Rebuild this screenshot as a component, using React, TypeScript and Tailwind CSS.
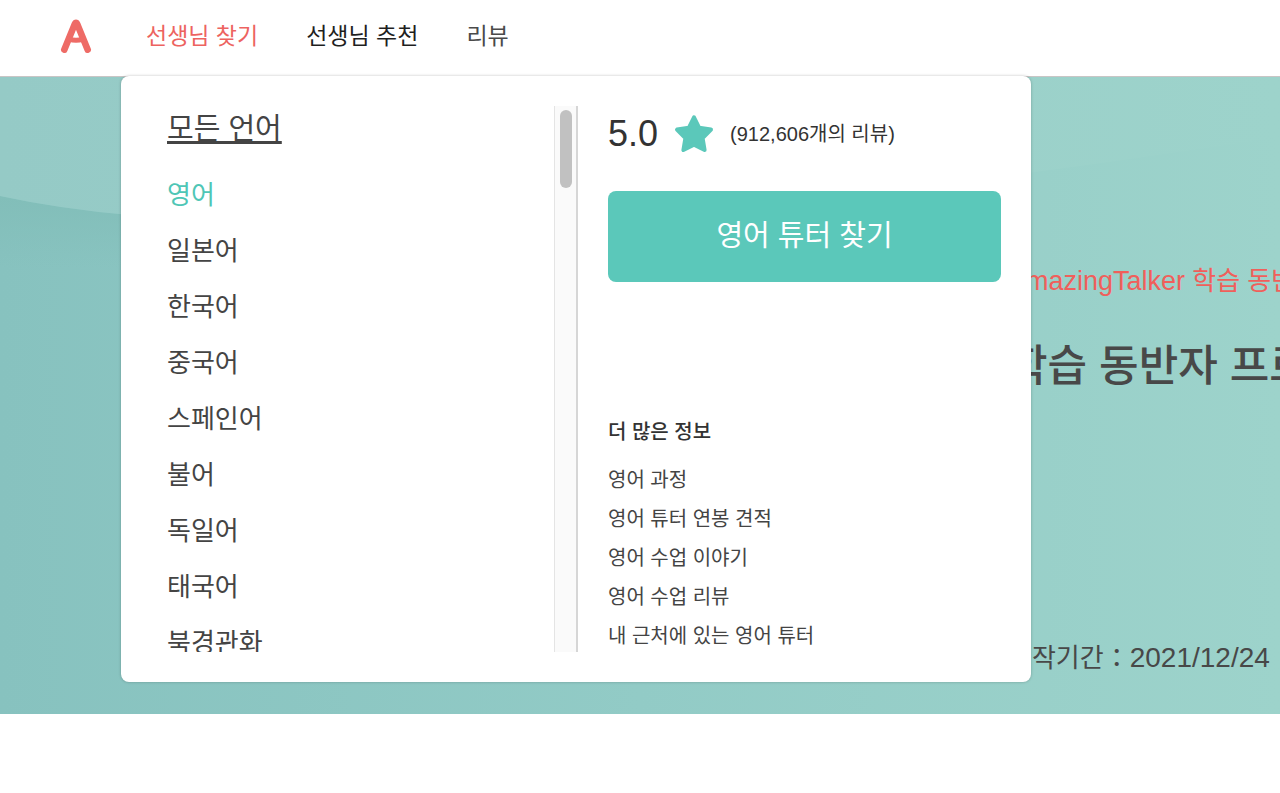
import clsx from "clsx";

const navItems = [
  { text: "선생님 찾기", className: "text-[#ed6360]" },
  { text: "선생님 추천", className: "text-[#1f1f1f]" },
  { text: "리뷰", className: "text-[#4a4a4a]" },
];

const languages = [
  "영어",
  "일본어",
  "한국어",
  "중국어",
  "스페인어",
  "불어",
  "독일어",
  "태국어",
  "북경관화",
];

const moreLinks = [
  "영어 과정",
  "영어 튜터 연봉 견적",
  "영어 수업 이야기",
  "영어 수업 리뷰",
  "내 근처에 있는 영어 튜터",
];

const Logo = () => (
  <svg viewBox="0 0 32 36" className="h-9 w-8" aria-hidden="true">
    <path
      d="M4.3 31.7 14.6 6.4Q16 3.4 17.4 6.4L27.7 31.7"
      fill="none"
      stroke="#ee6b66"
      strokeWidth="6.6"
      strokeLinecap="round"
      strokeLinejoin="round"
    />
    <path
      d="M9 21.2Q16 23.4 23 21.2"
      fill="none"
      stroke="#ee6b66"
      strokeWidth="5"
    />
  </svg>
);

const Star = () => (
  <svg viewBox="0 0 40 40" className="size-10" aria-hidden="true">
    <path
      d="M20 3.4 25.2 13.8 37 15.6 28.6 24.2 30.6 36 20 30.6 9.4 36 11.4 24.2 3 15.6 14.8 13.8Z"
      fill="#5bc8ba"
      stroke="#5bc8ba"
      strokeWidth="4"
      strokeLinejoin="round"
    />
  </svg>
);

const Header = () => (
  <header className="flex h-[77px] items-center border-b border-[#c9c5c5] bg-white pb-1 pl-15">
    <a href="#home" aria-label="AmazingTalker">
      <Logo />
    </a>
    <nav className="ml-[54px] flex gap-12 text-[23px] leading-8">
      {navItems.map(({ text, className }) => (
        <a key={text} href="#nav" className={className}>
          {text}
        </a>
      ))}
    </nav>
  </header>
);

const LanguageList = () => (
  <div className="flex h-[546px] flex-1">
    <div className="flex-1 overflow-hidden pt-px text-[#444]">
      <a
        href="#all"
        className="mb-4 block h-11 text-[29px] leading-11 underline decoration-3 underline-offset-2"
      >
        모든 언어
      </a>
      <ul className="text-[26px] leading-14">
        {languages.map((language, i) => (
          <li key={language}>
            <a href="#language" className={clsx(i === 0 && "text-[#4fc6b6]")}>
              {language}
            </a>
          </li>
        ))}
      </ul>
    </div>
    <div className="w-6 border-r-2 border-l border-r-[#d6d6d6] border-l-[#e4e4e4] bg-[#fafafa] px-1 pt-1">
      <div className="mx-auto h-[78px] w-3 rounded-full bg-[#c1c1c1]" />
    </div>
  </div>
);

const LanguageDetail = () => (
  <div className="w-[453px] px-[30px] text-[#333]">
    <div className="flex h-14 items-center">
      <span className="text-4xl">5.0</span>
      <span className="mx-4">
        <Star />
      </span>
      <span className="text-xl">(912,606개의 리뷰)</span>
    </div>
    <button
      type="button"
      className="mt-[29px] h-[91px] w-full rounded-lg bg-[#5bc8ba] text-[29px] text-white"
    >
      영어 튜터 찾기
    </button>
    <h2 className="mt-[135px] text-xl leading-[30px] font-medium">
      더 많은 정보
    </h2>
    <ul className="-mb-4 pt-[14px] text-xl leading-[39px] text-[#444]">
      {moreLinks.map((text) => (
        <li key={text}>
          <a href="#more">{text}</a>
        </li>
      ))}
    </ul>
  </div>
);

const Hero = () => (
  <section className="relative h-[637px] overflow-hidden bg-linear-to-r from-[#87c2bf] via-[#92cbc6] to-[#9dd3cb]">
    <svg
      viewBox="0 0 1280 637"
      preserveAspectRatio="none"
      className="absolute inset-0 size-full"
      aria-hidden="true"
    >
      <defs>
        <linearGradient id="shade" x1="0" y1="0" x2="0" y2="1">
          <stop offset="0" stopColor="#82beb9" />
          <stop offset="1" stopColor="#82beb9" stopOpacity="0" />
        </linearGradient>
        <linearGradient id="glow" x1="0" y1="0" x2="1" y2="0">
          <stop offset="0" stopColor="#95cac6" />
          <stop offset="1" stopColor="#9dd3cb" />
        </linearGradient>
      </defs>
      <path d="M0 119Q60 132 130 138V190H0Z" fill="url(#shade)" />
      <path d="M0 0H1280V60Q500 180 130 138Q60 132 0 119Z" fill="url(#glow)" />
    </svg>
    <div className="relative flex justify-end whitespace-nowrap text-[#484848]">
      <div className="w-[272px] pt-[184px]">
        <p className="text-[26px] leading-10 text-[#f05f5b]">
          <span className="text-[27px]">AmazingTalker</span> 학습 동반자
        </p>
        <h1 className="mt-[33px] text-[43px] leading-16 font-medium">
          학습 동반자 프로그램
        </h1>
        <p className="mt-[240px] text-[26px] leading-10">
          시작기간：<span className="text-[28px]">2021/12/24</span>
        </p>
      </div>
    </div>
  </section>
);

const App = () => (
  <div className="relative min-h-screen overflow-x-hidden bg-white font-['Liberation_Sans','Noto_Sans_CJK_KR',sans-serif]">
    <Header />
    <Hero />
    <div className="absolute top-[76px] left-[121px] flex w-[910px] rounded-lg bg-white py-[30px] pl-[46px] shadow-[0_0_3px_rgba(0,0,0,0.25)]">
      <LanguageList />
      <LanguageDetail />
    </div>
  </div>
);

export default App;
